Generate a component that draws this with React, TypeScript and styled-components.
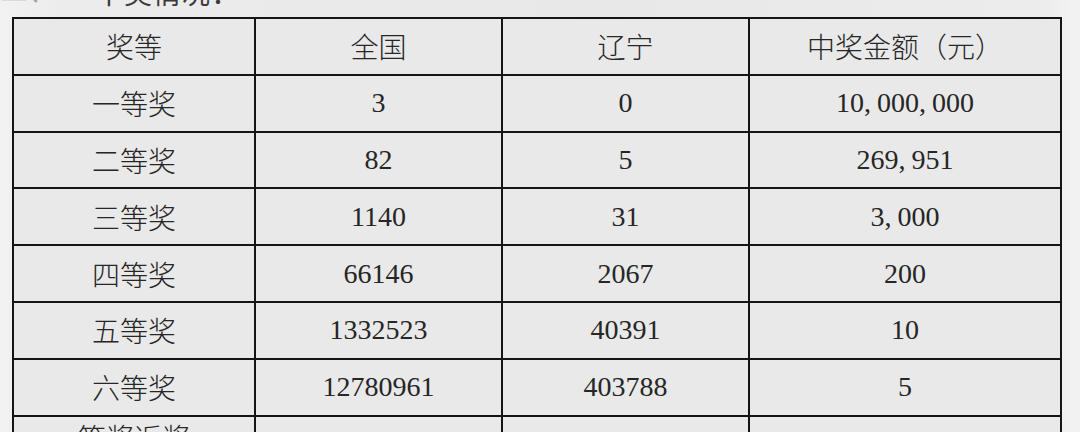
import React from "react";
import styled, { createGlobalStyle } from "styled-components";

const Global = createGlobalStyle`
  html, body {
    margin: 0;
    padding: 0;
    background: #eeeeee;
    overflow: hidden;
  }
  body {
    font-family: "Noto Sans CJK SC", "Liberation Serif", serif;
  }
`;

const Page = styled.div`
  width: 1080px;
  height: 432px;
  overflow: hidden;
  background: linear-gradient(90deg, #f2f2f2 0px, #ececec 60px, #e8e8e8 600px, #ececec 1040px, #f3f3f3 1080px);
  padding-left: 12px;
  box-sizing: border-box;
`;

const Heading = styled.div`
  display: flex;
  align-items: flex-end;
  height: 17px;
  box-sizing: border-box;
  padding-bottom: 11px;
  overflow: hidden;
  font-family: "Noto Sans CJK SC", sans-serif;
  font-size: 28px;
  line-height: 28px;
  color: #3a3a3a;
  margin-left: -12px;
`;

const HeadNum = styled.span`
  display: block;
  width: 95px;
  margin-bottom: 3px;
  color: #a0a0a0;
`;

const HeadTitle = styled.span`
  display: block;
  letter-spacing: 1px;
`;

const Table = styled.table`
  border-collapse: collapse;
  width: 1048px;
  table-layout: fixed;
  background: #e9e9e9;
`;

const Cell = styled.td<{ $cjk?: boolean }>`
  border: 2px solid #151515;
  height: 54.8px;
  padding: 0;
  text-align: center;
  vertical-align: middle;
  color: #262626;
  font-family: ${(p) =>
    p.$cjk ? '"Noto Sans CJK SC", sans-serif' : '"Liberation Serif", serif'};
  font-size: 28px;
  font-weight: ${(p) => (p.$cjk ? 300 : 400)};
  line-height: 28px;
  white-space: nowrap;
`;

const HeadCell = styled(Cell).attrs({ as: "th" })`
  font-weight: 300;
`;

const Partial = styled(Cell)`
  height: 40px;
  vertical-align: top;
  padding-top: 6px;
`;

const Sep = styled.span`
  margin-right: 6px;
`;

const Amount: React.FC<{ v: string }> = ({ v }) => {
  const parts = v.split(",");
  return (
    <>
      {parts.map((p, i) => (
        <React.Fragment key={i}>
          {p}
          {i < parts.length - 1 && <Sep>,</Sep>}
        </React.Fragment>
      ))}
    </>
  );
};

const rows: [string, string, string, string][] = [
  ["一等奖", "3", "0", "10,000,000"],
  ["二等奖", "82", "5", "269,951"],
  ["三等奖", "1140", "31", "3,000"],
  ["四等奖", "66146", "2067", "200"],
  ["五等奖", "1332523", "40391", "10"],
  ["六等奖", "12780961", "403788", "5"],
];

export default function App() {
  return (
    <Page>
      <Global />
      <Heading>
        <HeadNum>二、</HeadNum>
        <HeadTitle>中奖情况：</HeadTitle>
      </Heading>
      <Table>
        <colgroup>
          <col style={{ width: 242 }} />
          <col style={{ width: 247 }} />
          <col style={{ width: 247 }} />
          <col style={{ width: 312 }} />
        </colgroup>
        <thead>
          <tr>
            <HeadCell $cjk>奖等</HeadCell>
            <HeadCell $cjk>全国</HeadCell>
            <HeadCell $cjk>辽宁</HeadCell>
            <HeadCell $cjk>中奖金额（元）</HeadCell>
          </tr>
        </thead>
        <tbody>
          {rows.map((r) => (
            <tr key={r[0]}>
              <Cell $cjk>{r[0]}</Cell>
              <Cell>{r[1]}</Cell>
              <Cell>{r[2]}</Cell>
              <Cell>
                <Amount v={r[3]} />
              </Cell>
            </tr>
          ))}
          <tr>
            <Partial $cjk>等奖返奖</Partial>
            <Partial />
            <Partial />
            <Partial />
          </tr>
        </tbody>
      </Table>
    </Page>
  );
}
